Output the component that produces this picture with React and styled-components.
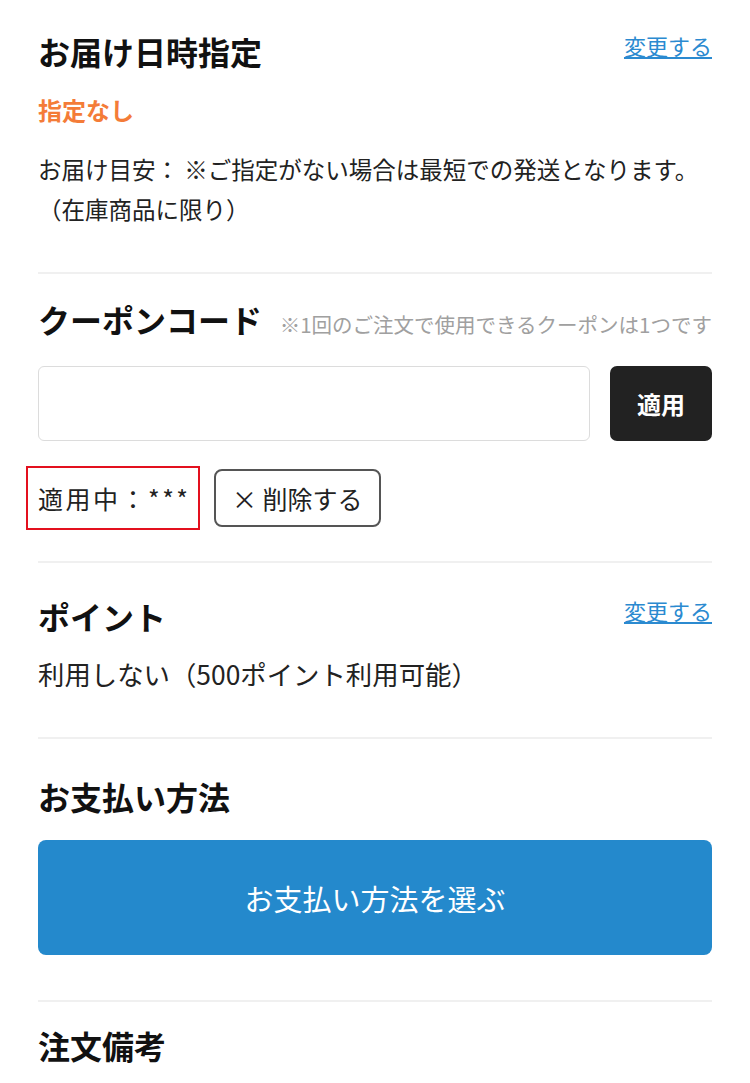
import React from 'react';
import styled, { createGlobalStyle } from 'styled-components';

const black = '#111';
const text = '#222';
const line = '#f0f0f0';
const linkBlue = 'rgb(43, 138, 208)';
const orange = 'rgb(244, 124, 56)';
const payBlue = 'rgb(36, 137, 204)';

const GlobalStyle = createGlobalStyle`
  html, body {
    margin: 0;
    padding: 0;
    background: #fff;
  }
  body {
    font-family: "Noto Sans CJK JP", "Noto Sans", sans-serif;
    color: ${text};
  }
`;

const Page = styled.div`
  padding: 0 38px;
`;

const Section = styled.section`
  padding-top: ${props => props.pt}px;
  padding-bottom: ${props => props.pb || 0}px;
  border-bottom: ${props => props.last ? 'none' : `2px solid ${line}`};
`;

const TitleRow = styled.div`
  display: flex;
  justify-content: space-between;
  align-items: ${props => props.align || 'flex-start'};
  white-space: nowrap;
`;

const Heading = styled.h2`
  margin: 0;
  font-size: 32px;
  line-height: 42px;
  font-weight: 700;
  color: ${black};
`;

const Note = styled.span`
  margin-left: auto;
  font-size: 20.5px;
  color: #a0a0a0;
`;

const ChangeLink = styled.a`
  font-size: 22px;
  line-height: 30px;
  color: ${linkBlue};
  text-decoration: underline;
  cursor: pointer;
`;

const Status = styled.div`
  margin-top: 20px;
  font-size: 24px;
  line-height: 36px;
  font-weight: 700;
  color: ${orange};
`;

const Body = styled.p`
  margin: ${props => props.mt}px 0 0;
  font-size: ${props => props.size || 23}px;
  line-height: 40px;
  color: ${text};
  white-space: pre-line;
`;

const Form = styled.div`
  display: flex;
  gap: 20px;
  margin-top: 26px;
`;

const CodeInput = styled.input`
  flex: 1;
  min-width: 0;
  height: 75px;
  box-sizing: border-box;
  border: 1px solid #dcdcdc;
  border-radius: 6px;
  padding: 0 16px;
  font-size: 22px;
  outline: none;
`;

const ApplyButton = styled.button`
  width: 102px;
  height: 75px;
  border: none;
  border-radius: 7px;
  background: #222;
  color: #fff;
  font-family: inherit;
  font-size: 24px;
  font-weight: 700;
`;

const AppliedRow = styled.div`
  display: flex;
  align-items: center;
  gap: 14px;
  margin-top: 25px;
`;

const AppliedCode = styled.span`
  display: flex;
  align-items: center;
  box-sizing: border-box;
  height: 64px;
  width: 174px;
  margin-left: -12px;
  padding-left: 10px;
  border: 2px solid #e3101e;
  font-size: 25px;
  letter-spacing: 2.5px;
  color: ${text};
  white-space: nowrap;
`;

const DeleteButton = styled.button`
  height: 58px;
  padding: 0 16px;
  border: 2px solid #555;
  border-radius: 8px;
  background: #fff;
  color: ${text};
  font-family: inherit;
  font-size: 25px;
`;

const PayButton = styled.button`
  display: block;
  width: 100%;
  height: 115px;
  margin-top: 23px;
  border: none;
  border-radius: 8px;
  background: ${payBlue};
  color: #fff;
  font-family: inherit;
  font-size: 29px;
  font-weight: 400;
`;

const App = () => (
  <>
    <GlobalStyle />
    <Page>
      <Section pt={30} pb={43}>
        <TitleRow>
          <Heading>お届け日時指定</Heading>
          <ChangeLink>変更する</ChangeLink>
        </TitleRow>
        <Status>指定なし</Status>
        <Body mt={21} size={23.5}>{'お届け目安： ※ご指定がない場合は最短での発送となります。\n（在庫商品に限り）'}</Body>
      </Section>

      <Section pt={24} pb={31}>
        <TitleRow align="baseline">
          <Heading>クーポンコード</Heading>
          <Note>※1回のご注文で使用できるクーポンは1つです</Note>
        </TitleRow>
        <Form>
          <CodeInput type="text" />
          <ApplyButton>適用</ApplyButton>
        </Form>
        <AppliedRow>
          <AppliedCode>適用中：***</AppliedCode>
          <DeleteButton>× 削除する</DeleteButton>
        </AppliedRow>
      </Section>

      <Section pt={32} pb={43}>
        <TitleRow>
          <Heading>ポイント</Heading>
          <ChangeLink>変更する</ChangeLink>
        </TitleRow>
        <Body mt={17} size={26.4}>利用しない（500ポイント利用可能）</Body>
      </Section>

      <Section pt={36} pb={45}>
        <Heading>お支払い方法</Heading>
        <PayButton>お支払い方法を選ぶ</PayButton>
      </Section>

      <Section pt={22} last>
        <Heading>注文備考</Heading>
      </Section>
    </Page>
  </>
);

export default App;
